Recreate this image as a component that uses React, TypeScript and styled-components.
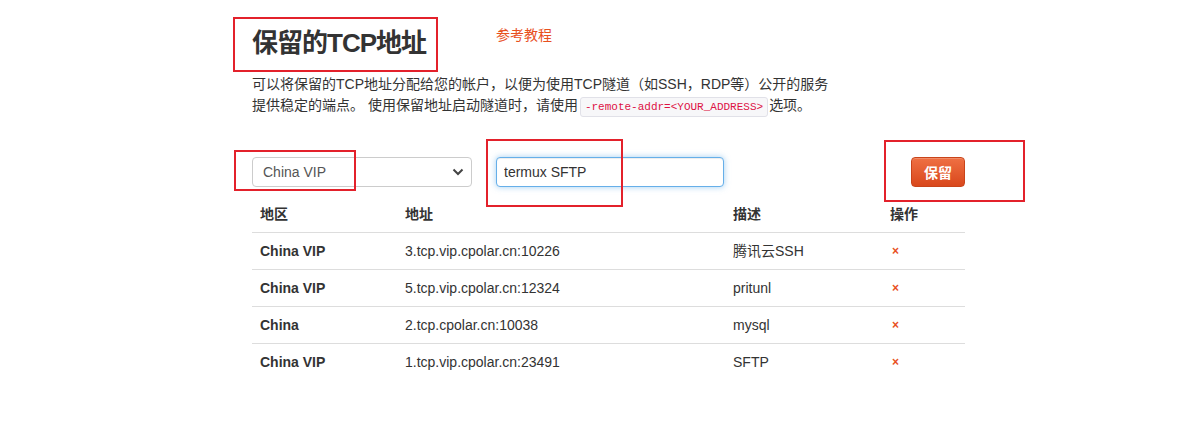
import React, { useState } from 'react';
import styled, { createGlobalStyle } from 'styled-components';

const GlobalStyle = createGlobalStyle`
  body {
    margin: 0;
    background: #ffffff;
    font-family: "Liberation Sans", "Noto Sans CJK SC", sans-serif;
    font-size: 14px;
    color: #333333;
  }
`;

const Page = styled.div`
  width: 713px;
  padding: 25px 0 0 252px;
`;

const Header = styled.div`
  display: flex;
  align-items: flex-start;
`;

const Title = styled.h2`
  position: relative;
  width: 166px;
  margin: 0;
  font-size: 26px;
  line-height: 36px;
  font-weight: bold;
  letter-spacing: -1px;
  white-space: nowrap;
  color: #333333;
`;

const GuideLink = styled.a`
  margin-left: 78px;
  line-height: 20px;
  color: #e8501e;
  text-decoration: none;
  cursor: pointer;
`;

const Description = styled.p`
  margin: 13px 0 0;
  line-height: 21px;
  color: #333333;
`;

const Code = styled.code`
  display: inline-block;
  margin: 0 1px 0 2px;
  padding: 0 4px;
  line-height: 18px;
  font-family: "Liberation Mono", monospace;
  font-size: 11px;
  color: #dd1144;
  background: #f7f7f9;
  border: 1px solid #e1e1e8;
  border-radius: 3px;
`;

const FormRow = styled.div`
  display: flex;
  align-items: flex-start;
  margin-top: 40px;
`;

const Field = styled.div<{ $width: number }>`
  position: relative;
  width: ${(p) => p.$width}px;
  height: 30px;
  margin-right: 24px;
`;

const Select = styled.select`
  width: 100%;
  height: 30px;
  padding: 0 30px 0 10px;
  appearance: none;
  font-family: inherit;
  font-size: 14px;
  color: #555555;
  background: #ffffff;
  border: 1px solid #cccccc;
  border-radius: 4px;
  outline: none;
`;

const Chevron = styled.svg`
  position: absolute;
  right: 8px;
  top: 11px;
  pointer-events: none;
`;

const Input = styled.input`
  box-sizing: border-box;
  width: 100%;
  height: 30px;
  padding: 0 7px;
  font-family: inherit;
  font-size: 14px;
  color: #333333;
  background: #ffffff;
  border: 1px solid #66afe9;
  border-radius: 4px;
  outline: none;
  box-shadow: inset 0 1px 1px rgba(0, 0, 0, 0.075), 0 0 6px rgba(102, 175, 233, 0.6);
`;

const ButtonWrap = styled.div`
  position: relative;
  margin-left: auto;
`;

const Button = styled.button`
  display: block;
  width: 54px;
  height: 30px;
  padding: 0;
  font-family: inherit;
  font-size: 14px;
  font-weight: bold;
  color: #ffffff;
  background: linear-gradient(to bottom, #ef7043, #d9481c);
  border: 1px solid #c9441a;
  border-radius: 4px;
  box-shadow: inset 0 1px 0 rgba(255, 255, 255, 0.2);
  cursor: pointer;
`;

// red annotation frames drawn over the screenshot
const Annotation = styled.div<{ $l: number; $t: number; $w: number; $h: number }>`
  position: absolute;
  left: ${(p) => p.$l}px;
  top: ${(p) => p.$t}px;
  width: ${(p) => p.$w}px;
  height: ${(p) => p.$h}px;
  box-sizing: border-box;
  border: 2px solid #e3212b;
  pointer-events: none;
`;

const Table = styled.table`
  width: 713px;
  margin-top: 9px;
  table-layout: fixed;
  border-collapse: collapse;
  border-spacing: 0;
`;

const Th = styled.th<{ $width: number }>`
  box-sizing: border-box;
  width: ${(p) => p.$width}px;
  height: 36px;
  padding: 8px;
  line-height: 20px;
  text-align: left;
  font-weight: bold;
  color: #333333;
  border-bottom: 1px solid #dddddd;
`;

const Td = styled.td<{ $bold?: boolean }>`
  height: 20px;
  padding: 8px;
  line-height: 20px;
  color: #333333;
  font-weight: ${(p) => (p.$bold ? 'bold' : 'normal')};
  border-top: 1px solid #dddddd;
  white-space: nowrap;

  tr:first-child > & {
    border-top: none;
  }
`;

const Remove = styled.span`
  display: inline-block;
  margin-left: 2px;
  line-height: 20px;
  font-size: 12px;
  font-weight: bold;
  vertical-align: top;
  color: #e8501e;
  cursor: pointer;
`;

const rows = [
  { region: 'China VIP', address: '3.tcp.vip.cpolar.cn:10226', desc: '腾讯云SSH' },
  { region: 'China VIP', address: '5.tcp.vip.cpolar.cn:12324', desc: 'pritunl' },
  { region: 'China', address: '2.tcp.cpolar.cn:10038', desc: 'mysql' },
  { region: 'China VIP', address: '1.tcp.vip.cpolar.cn:23491', desc: 'SFTP' },
];

const App: React.FC = () => {
  const [region, setRegion] = useState('China VIP');
  const [desc, setDesc] = useState('termux SFTP');

  return (
    <Page>
      <GlobalStyle />
      <Header>
        <Title>
          保留的TCP地址
          <Annotation $l={-19} $t={-8} $w={205} $h={55} />
        </Title>
        <GuideLink>参考教程</GuideLink>
      </Header>
      <Description>
        可以将保留的TCP地址分配给您的帐户，以便为使用TCP隧道（如SSH，RDP等）公开的服务
        <br />
        提供稳定的端点。 使用保留地址启动隧道时，请使用<Code>-remote-addr=&lt;YOUR_ADDRESS&gt;</Code>选项。
      </Description>
      <FormRow>
        <Field $width={220}>
          <Select value={region} onChange={(e) => setRegion(e.target.value)}>
            <option>China VIP</option>
            <option>China</option>
            <option>United States</option>
          </Select>
          <Chevron width="12" height="8" viewBox="0 0 12 8">
            <path d="M1.5 1.5 L6 6 L10.5 1.5" fill="none" stroke="#444" strokeWidth="2" />
          </Chevron>
          <Annotation $l={-18} $t={-7} $w={122} $h={41} />
        </Field>
        <Field $width={228}>
          <Input value={desc} onChange={(e) => setDesc(e.target.value)} />
          <Annotation $l={-10} $t={-18} $w={137} $h={68} />
        </Field>
        <ButtonWrap>
          <Button>保留</Button>
          <Annotation $l={-27} $t={-17} $w={141} $h={62} />
        </ButtonWrap>
      </FormRow>
      <Table>
        <thead>
          <tr>
            <Th $width={145}>地区</Th>
            <Th $width={328}>地址</Th>
            <Th $width={157}>描述</Th>
            <Th $width={83}>操作</Th>
          </tr>
        </thead>
        <tbody>
          {rows.map((r) => (
            <tr key={r.address}>
              <Td $bold>{r.region}</Td>
              <Td>{r.address}</Td>
              <Td>{r.desc}</Td>
              <Td>
                <Remove>×</Remove>
              </Td>
            </tr>
          ))}
        </tbody>
      </Table>
    </Page>
  );
};

export default App;
